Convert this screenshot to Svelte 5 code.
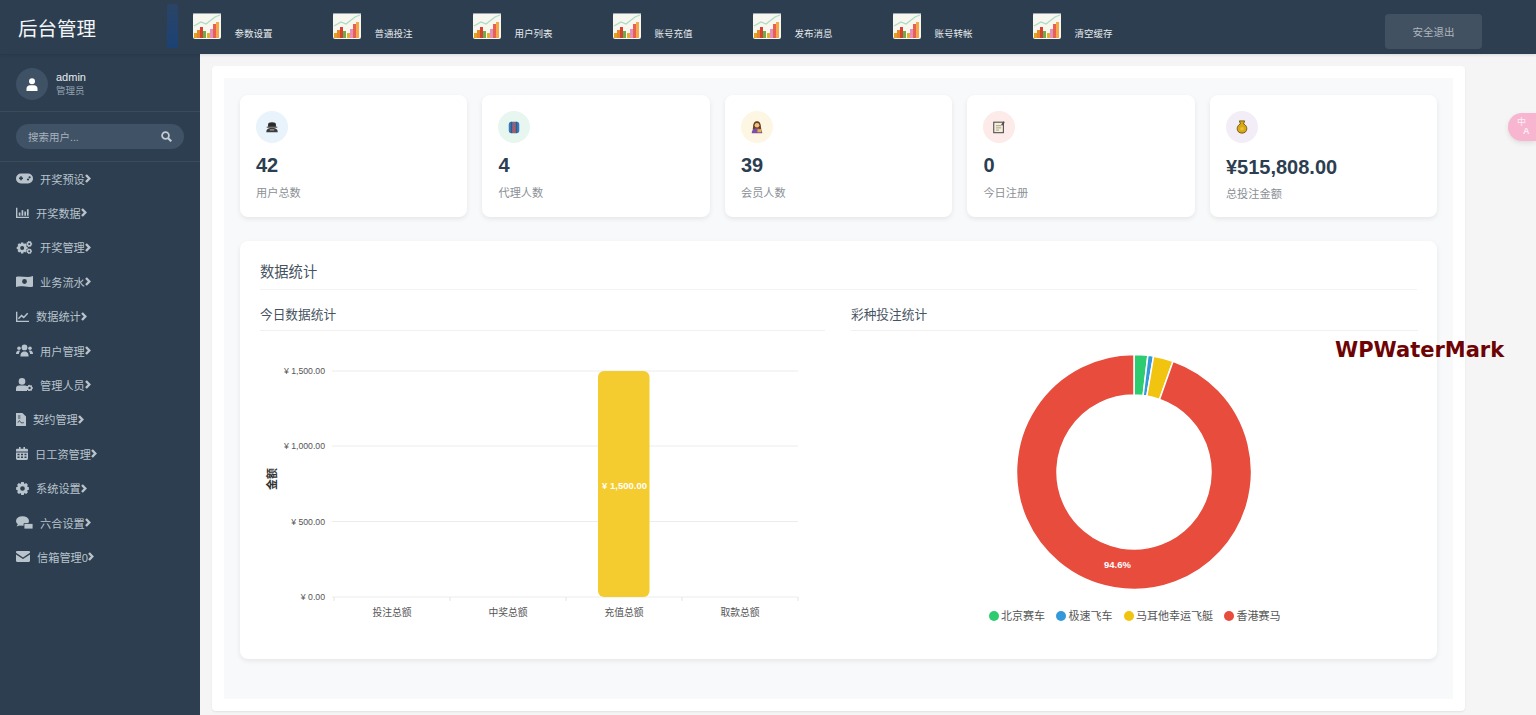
<script>
  function gear(cx, cy, r, teeth = 8) {
    const inner = r * 0.76;
    const step = (Math.PI * 2) / teeth;
    let d = '';
    for (let i = 0; i < teeth; i++) {
      const a = i * step;
      const pts = [
        [inner, a - step * 0.5],
        [r, a - step * 0.24],
        [r, a + step * 0.24]
      ];
      for (const [rad, ang] of pts) {
        d += `${d ? 'L' : 'M'}${(cx + rad * Math.cos(ang)).toFixed(2)} ${(cy + rad * Math.sin(ang)).toFixed(2)}`;
      }
    }
    const h = r * 0.36;
    d += `ZM${cx - h} ${cy}a${h} ${h} 0 1 0 ${h * 2} 0a${h} ${h} 0 1 0 ${-h * 2} 0Z`;
    return `<path fill-rule="evenodd" d="${d}"/>`;
  }

  const navItems = ['参数设置', '普通投注', '用户列表', '账号充值', '发布消息', '账号转帐', '清空缓存'];

  const menu = [
    { label: '开奖预设', w: 17, box: '0 0 17 12', icon: '<rect x="0" y="1" width="17" height="10" rx="5"/><rect x="3" y="5" width="4" height="1.6" fill="#2c3e50"/><rect x="4.2" y="3.8" width="1.6" height="4" fill="#2c3e50"/><circle cx="12" cy="7" r="1.1" fill="#2c3e50"/><circle cx="13.6" cy="4.8" r="1.1" fill="#2c3e50"/>' },
    { label: '开奖数据', w: 13, box: '0 0 14 12', icon: '<path d="M0 1h1.5v9.5H14V12H0z"/><rect x="3" y="6" width="1.8" height="3.5"/><rect x="6" y="3.5" width="1.8" height="6"/><rect x="9" y="5" width="1.8" height="4.5"/><rect x="11.8" y="2.5" width="1.8" height="7"/>' },
    { label: '开奖管理', w: 17, box: '0 0 17 14', icon: gear(6, 7.5, 6, 8) + gear(13.6, 3.2, 3.2, 7) + gear(13.6, 11, 3, 7) },
    { label: '业务流水', w: 17, box: '0 0 17 12', icon: '<path d="M0 1.4C5 -.2 11 3 17 .6V11C12 12.6 6 9.6 0 11.4z"/><circle cx="8.5" cy="6" r="2.4" fill="#2c3e50"/>' },
    { label: '数据统计', w: 13, box: '0 0 14 12', icon: '<path d="M0 1h1.5v9.5H14V12H0z"/><path d="M2.6 8.4 6 5l2.3 2L12.6 2.6" fill="none" stroke="currentColor" stroke-width="1.6"/>' },
    { label: '用户管理', w: 17, box: '0 0 17 13', icon: '<circle cx="8.5" cy="3.4" r="2.9"/><circle cx="3" cy="4.3" r="1.8"/><circle cx="14" cy="4.3" r="1.8"/><path d="M4.4 12.6c0-3.6 1.6-5 4.1-5s4.1 1.4 4.1 5z"/><path d="M0 10c0-2.4 1-3.6 3-3.6l1.2.4C3.4 7.7 3 8.6 2.9 10zM17 10c0-2.4-1-3.6-3-3.6l-1.2.4c.8.9 1.2 1.8 1.3 3.2z"/>' },
    { label: '管理人员', w: 17, box: '0 0 17 13', icon: '<circle cx="6" cy="3.4" r="3.3"/><path d="M0 13V10.2C0 8.4 1.4 7.4 3 7.4h6c1 0 1.6.3 2 .8V13z"/>' + gear(13.6, 10, 3.3, 7) },
    { label: '契约管理', w: 10, box: '0 0 10 13', icon: '<path d="M0 0h6.4L10 3.6V13H0z"/><path d="M2 3h2.4M2 5h2.4M2 9.6c1-2.6 1.8-2.2 2.4-.6.5 1 1.6 1 3.4.6" fill="none" stroke="#2c3e50" stroke-width=".9"/>' },
    { label: '日工资管理', w: 12, box: '0 0 12 13', icon: '<path fill-rule="evenodd" d="M0 3.2C0 2.3.6 1.8 1.4 1.8H3V0h1.6v1.8h2.8V0H9v1.8h1.6c.8 0 1.4.5 1.4 1.4v1.3H0zM0 5.4h12v6.2c0 .9-.6 1.4-1.4 1.4H1.4C.6 13 0 12.5 0 11.6zM1.5 6.8v1.4h2V6.8zm3.5 0v1.4h2V6.8zm3.5 0v1.4h2V6.8zM1.5 9.6V11h2V9.6zm3.5 0V11h2V9.6zm3.5 0V11h2V9.6z"/>' },
    { label: '系统设置', w: 13, box: '0 0 13 13', icon: gear(6.5, 6.5, 6.5, 8) },
    { label: '六合设置', w: 17, box: '0 0 17 13', icon: '<ellipse cx="6.5" cy="5" rx="6.5" ry="4.8"/><path d="M2 8l-1.5 2.5L5 9z"/><path d="M8 7.5h9V13H8z" stroke="#2c3e50" stroke-width=".8"/>' },
    { label: '信箱管理0', w: 14, box: '0 0 14 11', icon: '<path d="M0 1.2C0 .5.5 0 1.2 0h11.6C13.5 0 14 .5 14 1.2v.5L7 6.4 0 1.7z"/><path d="M0 3.4 7 8l7-4.6v6.4c0 .7-.5 1.2-1.2 1.2H1.2C.5 11 0 10.5 0 9.8z"/>' }
  ];

  const stats = [
    { value: '42', label: '用户总数', bg: '#e8f3fb', kind: 'hat' },
    { value: '4', label: '代理人数', bg: '#e8f6f0', kind: 'vest' },
    { value: '39', label: '会员人数', bg: '#fdf6e3', kind: 'woman' },
    { value: '0', label: '今日注册', bg: '#fcebe9', kind: 'note' },
    { value: '¥515,808.00', label: '总投注金额', bg: '#f3edf7', kind: 'bag', money: true }
  ];

  const yTicks = [
    { label: '¥ 1,500.00', y: 371 },
    { label: '¥ 1,000.00', y: 446 },
    { label: '¥ 500.00', y: 521.5 },
    { label: '¥ 0.00', y: 597 }
  ];
  const categories = ['投注总额', '中奖总额', '充值总额', '取款总额'];

  function arc(a0, a1) {
    const cx = 1134, cy = 472, R = 117.5, r = 77;
    const p = (rad, deg) => {
      const t = ((deg - 90) * Math.PI) / 180;
      return `${(cx + rad * Math.cos(t)).toFixed(2)} ${(cy + rad * Math.sin(t)).toFixed(2)}`;
    };
    const large = a1 - a0 > 180 ? 1 : 0;
    return `M${p(R, a0)}A${R} ${R} 0 ${large} 1 ${p(R, a1)}L${p(r, a1)}A${r} ${r} 0 ${large} 0 ${p(r, a0)}Z`;
  }

  const slices = [
    { name: '北京赛车', color: '#2ecc71', from: 0, to: 6.8 },
    { name: '极速飞车', color: '#3498db', from: 6.8, to: 9.6 },
    { name: '马耳他幸运飞艇', color: '#f1c40f', from: 9.6, to: 19.4 },
    { name: '香港赛马', color: '#e74c3c', from: 19.4, to: 360 }
  ];
</script>

{#snippet thumb()}
  <svg class="thumb" width="28" height="26" viewBox="0 0 28 26">
    <rect width="28" height="26" rx="2" fill="#f7f6ef" />
    <path d="M0 .5h28" stroke="#9aa5ab" />
    <path d="M1 13 8 9l5 2 9-7 5-2" fill="none" stroke="#a9dcc4" stroke-width="1.2" />
    <rect x="1" y="20" width="3" height="5" fill="#e0a21f" />
    <rect x="4" y="17" width="3" height="8" fill="#e8862c" />
    <rect x="7" y="14" width="3" height="11" fill="#d8402f" />
    <rect x="10" y="18" width="3" height="7" fill="#6cab4e" />
    <rect x="14" y="20" width="3" height="5" fill="#e6b12f" />
    <rect x="17" y="16" width="3" height="9" fill="#e28fc0" />
    <rect x="20" y="11" width="3" height="14" fill="#e8604f" />
    <rect x="23" y="9" width="3" height="16" fill="#f4a84a" />
  </svg>
{/snippet}

{#snippet statIcon(kind)}
  <svg width="14" height="14" viewBox="0 0 16 16">
    {#if kind === 'hat'}
      <path d="M3.5 8V5C3.5 3.5 5 2.5 8 2.5s4.5 1 4.5 2.5V8z" fill="#2b2b2b" />
      <rect x="2" y="7.5" width="12" height="1.5" fill="#666" />
      <path d="M1.5 14c0-3 1-5 6.5-5s6.5 2 6.5 5z" fill="#3c3c3c" />
      <rect x="5.5" y="10.5" width="5" height="1.5" fill="#999" />
    {:else if kind === 'vest'}
      <rect x="2" y="2" width="12" height="13" rx="3" fill="#3b78b5" />
      <path d="M7 2.5h2l.8 12H6.200z" fill="#c9504f" />
      <path d="M5 2v13M11 2v13" stroke="#1e4f80" stroke-width=".8" />
    {:else if kind === 'woman'}
      <path d="M3.5 8c0-4.5 2-6.500 4.500-6.500S12.500 3.500 12.500 8l.5 3H3z" fill="#6d3f20" />
      <circle cx="8" cy="6" r="2.7" fill="#f1c27d" />
      <path d="M2 15c0-3.500 2.500-5.500 6-5.500s6 2 6 5.500z" fill="#7b4fa8" />
      <rect x="8.5" y="10.5" width="4.5" height="3.5" fill="#e3b23c" />
    {:else if kind === 'note'}
      <rect x="2" y="2.5" width="11" height="12" fill="#f7efdc" stroke="#4a4a4a" stroke-width="1.2" />
      <path d="M4.5 6.5h6M4.5 9h6M4.5 11.5h3.5" stroke="#8a7a5f" stroke-width=".8" />
      <path d="m11 6 3-4" stroke="#4a4a4a" stroke-width="1.5" />
    {:else}
      <path d="M5 1h6L9.800 4.500c2.400 1 3.700 3.200 3.700 5.500 0 3-2.200 5-5.500 5s-5.500-2-5.500-5c0-2.300 1.300-4.500 3.700-5.500z" fill="#d8a914" stroke="#6d5208" stroke-width="1" />
      <circle cx="8" cy="10" r="2" fill="#e8c23e" />
    {/if}
  </svg>
{/snippet}

<div class="page">
  <header class="topbar">
    <div class="brand">后台管理</div>
    <div class="strip"></div>
    <nav class="topnav">
      {#each navItems as item}
        <a class="nav-item" href="#top">
          {@render thumb()}
          <span>{item}</span>
        </a>
      {/each}
    </nav>
    <button class="logout">安全退出</button>
  </header>

  <div class="body">
    <aside class="sidebar">
      <div class="user">
        <div class="avatar">
          <svg width="12" height="13" viewBox="0 0 12 13" fill="#fff">
            <circle cx="6" cy="3.3" r="3" />
            <path d="M.5 13v-2.2C.5 8.5 2 7.3 4 7.3h4c2 0 3.5 1.2 3.5 3.5V13z" />
          </svg>
        </div>
        <div class="user-text">
          <div class="user-name">admin</div>
          <div class="user-role">管理员</div>
        </div>
      </div>
      <div class="search-wrap">
        <div class="search">
          <input type="text" placeholder="搜索用户..." />
          <svg width="11" height="11" viewBox="0 0 11 11" fill="none" stroke="#c3cbd3" stroke-width="1.8">
            <circle cx="4.5" cy="4.5" r="3.4" />
            <path d="m7 7 3.3 3.3" stroke-width="2.2" />
          </svg>
        </div>
      </div>
      <ul class="menu">
        {#each menu as m}
          <li>
            <svg class="menu-icon" width={m.w} height="13" viewBox={m.box}>{@html m.icon}</svg>
            <span>{m.label}</span>
            <svg class="chev" width="6" height="9" viewBox="0 0 6 9" fill="none" stroke="currentColor" stroke-width="2.4">
              <path d="m1 1 3.3 3.5L1 8" />
            </svg>
          </li>
        {/each}
      </ul>
    </aside>

    <main class="main">
      <div class="panel">
        <div class="inner">
          <section class="cards">
            {#each stats as s}
              <div class="card" class:money={s.money}>
                <div class="card-icon" style="background: {s.bg}">
                  {@render statIcon(s.kind)}
                </div>
                <div class="card-value">{s.value}</div>
                <div class="card-label">{s.label}</div>
              </div>
            {/each}
          </section>

          <section class="stats">
            <h2>数据统计</h2>
            <div class="columns">
              <div class="col">
                <h3>今日数据统计</h3>
                <svg class="bar-chart" viewBox="260 331 565 308" width="565" height="308">
                  {#each yTicks as t}
                    <line x1="332" x2="798" y1={t.y} y2={t.y} stroke="#ececec" />
                    <text x="325" y={t.y + 3} text-anchor="end" class="tick">{t.label}</text>
                  {/each}
                  {#each [334, 450, 566, 682, 798] as x}
                    <line x1={x} x2={x} y1="597" y2="601" stroke="#e4e4e4" />
                  {/each}
                  <rect x="598" y="371" width="51.5" height="226" rx="6" fill="#f4cc30" />
                  <text x="624.5" y="489" text-anchor="middle" class="bar-label">¥ 1,500.00</text>
                  {#each categories as c, i}
                    <text x={392 + i * 116} y="615.5" text-anchor="middle" class="cat">{c}</text>
                  {/each}
                  <text transform="translate(276 479) rotate(-90)" text-anchor="middle" class="axis">金额</text>
                </svg>
              </div>
              <div class="col">
                <h3>彩种投注统计</h3>
                <svg class="donut" viewBox="851 331 567 276" width="567" height="276">
                  {#each slices as s}
                    <path d={arc(s.from, s.to)} fill={s.color} stroke="#fff" stroke-width="1.5" />
                  {/each}
                  <text x="1117.5" y="568" text-anchor="middle" class="pct">94.6%</text>
                </svg>
                <div class="legend">
                  {#each slices as s}
                    <span class="legend-item"><i style="background: {s.color}"></i>{s.name}</span>
                  {/each}
                </div>
              </div>
            </div>
          </section>
        </div>
      </div>
    </main>
  </div>

  <div class="translate"><span>中</span><span class="a">A</span></div>
  <div class="watermark">WPWaterMark</div>
</div>

<style>
  :global(body) {
    margin: 0;
    overflow: hidden;
    background: #f5f5f5;
  }

  .page {
    position: relative;
    height: 715px;
    overflow: hidden;
    font-family: "Liberation Sans", "Noto Sans CJK SC", sans-serif;
  }

  .topbar {
    position: relative;
    z-index: 2;
    height: 54px;
    display: flex;
    align-items: center;
    background: #2c3e50;
    color: #fff;
    box-shadow: 0 1px 3px rgba(0, 0, 0, 0.12);
  }

  .brand {
    width: 149px;
    padding-left: 18px;
    font-size: 19.5px;
    color: #f4f6f7;
  }

  .strip {
    width: 11px;
    height: 44px;
    margin-top: -2px;
    border-radius: 2px;
    background: linear-gradient(#2a4466, #1b4275);
  }

  .topnav {
    display: flex;
    margin-left: 15px;
  }

  .nav-item {
    width: 140px;
    display: flex;
    gap: 13.5px;
    color: #e6e9ec;
    font-size: 9.5px;
    text-decoration: none;
  }

  .thumb {
    margin-top: -1px;
    flex: none;
  }

  .nav-item span {
    margin-top: 12px;
  }

  .logout {
    margin-left: auto;
    margin-right: 54px;
    margin-top: 8px;
    width: 97px;
    height: 35px;
    border: none;
    border-radius: 4px;
    background: rgba(255, 255, 255, 0.1);
    color: #aeb6be;
    font-family: inherit;
    font-size: 10.5px;
  }

  .body {
    display: flex;
    height: 661px;
  }

  .sidebar {
    width: 200px;
    flex: none;
    background: #2c3e50;
    color: #b9c3cc;
  }

  .user {
    height: 58px;
    box-sizing: border-box;
    padding: 14px 16px 0;
    display: flex;
    gap: 8px;
    border-bottom: 1px solid rgba(255, 255, 255, 0.07);
  }

  .avatar {
    width: 32px;
    height: 32px;
    border-radius: 50%;
    background: #3f5165;
    display: grid;
    place-items: center;
  }

  .user-text {
    padding-top: 2px;
  }

  .user-name {
    font-size: 11px;
    line-height: 14px;
    color: #e8ecef;
  }

  .user-role {
    font-size: 9.5px;
    line-height: 13px;
    color: #97a4b0;
  }

  .search-wrap {
    padding: 12px 16px;
    border-bottom: 1px solid rgba(255, 255, 255, 0.07);
  }

  .search {
    height: 25px;
    border-radius: 13px;
    background: #405266;
    display: flex;
    align-items: center;
    padding: 0 12px;
  }

  .search input {
    flex: 1;
    min-width: 0;
    border: none;
    outline: none;
    background: none;
    padding: 0;
    font-family: inherit;
    font-size: 10.5px;
    color: #c3cbd3;
  }

  .search input::placeholder {
    color: #a9b4be;
  }

  .menu {
    list-style: none;
    margin: -0.6px 0 0;
    padding: 0;
  }

  .menu li {
    height: 34.4px;
    padding-left: 16px;
    display: flex;
    align-items: center;
    gap: 7px;
    font-size: 11.2px;
  }

  .menu-icon {
    flex: none;
    fill: currentColor;
  }

  .chev {
    margin-left: -7px;
  }

  .main {
    flex: 1;
    padding: 12px 71px 4px 12px;
    min-width: 0;
  }

  .panel {
    height: 100%;
    box-sizing: border-box;
    padding: 12px;
    background: #fff;
    border-radius: 4px;
    box-shadow: 0 1px 2px rgba(0, 0, 0, 0.08);
  }

  .inner {
    height: 100%;
    box-sizing: border-box;
    padding: 17px 16px;
    background: #f7f9fa;
  }

  .cards {
    display: grid;
    grid-template-columns: repeat(5, 1fr);
    gap: 15.4px;
  }

  .card {
    height: 122px;
    box-sizing: border-box;
    padding: 16px;
    background: #fff;
    border-radius: 8px;
    box-shadow: 0 2px 5px rgba(0, 0, 0, 0.08);
  }

  .card-icon {
    width: 32px;
    height: 32px;
    border-radius: 50%;
    display: grid;
    place-items: center;
  }

  .card-value {
    margin-top: 10px;
    font-size: 20px;
    font-weight: 700;
    line-height: 24px;
    color: #2c3e50;
  }

  .card.money .card-value {
    margin-top: 12px;
  }

  .card-label {
    margin-top: 8px;
    font-size: 11.2px;
    line-height: 16px;
    color: #8b9095;
  }

  .card.money .card-label {
    margin-top: 7px;
  }

  .stats {
    margin-top: 24px;
    height: 418px;
    box-sizing: border-box;
    padding: 20px;
    background: #fff;
    border-radius: 8px;
    box-shadow: 0 2px 5px rgba(0, 0, 0, 0.08);
  }

  h2 {
    margin: 0 0 16px;
    padding: 1px 0 7px;
    border-bottom: 1px solid #f3f3f3;
    font-size: 14.3px;
    font-weight: 400;
    line-height: 20px;
    color: #46535f;
  }

  .columns {
    display: grid;
    grid-template-columns: 1fr 1fr;
    gap: 26px;
  }

  h3 {
    margin: 0;
    padding-bottom: 6px;
    border-bottom: 1px solid #f0f0f0;
    font-size: 12.7px;
    font-weight: 400;
    line-height: 18px;
    color: #46535f;
  }

  .bar-chart,
  .donut {
    display: block;
  }

  .tick {
    font-size: 8.7px;
    fill: #555;
  }

  .bar-label {
    font-size: 9.5px;
    font-weight: 700;
    fill: #fff;
  }

  .cat {
    font-size: 9.8px;
    fill: #555;
  }

  .axis {
    font-size: 11px;
    font-weight: 700;
    fill: #333;
  }

  .pct {
    font-size: 9.5px;
    font-weight: 700;
    fill: #fff;
  }

  .legend {
    display: flex;
    justify-content: center;
    gap: 11px;
    margin-top: 1px;
    font-size: 11px;
    line-height: 16px;
    color: #555;
  }

  .legend-item {
    display: flex;
    align-items: center;
    gap: 2.5px;
  }

  .legend-item i {
    width: 10px;
    height: 10px;
    border-radius: 50%;
  }

  .translate {
    position: absolute;
    right: 0;
    top: 113px;
    width: 28px;
    height: 28px;
    box-sizing: border-box;
    padding: 5px 0 0 9px;
    border-radius: 14px 0 0 14px;
    background: #f8b5d0;
    box-shadow: 0 2px 5px rgba(0, 0, 0, 0.1);
    color: #fdeef4;
    font-size: 9px;
    line-height: 9px;
  }

  .translate span {
    display: block;
  }

  .translate .a {
    margin-left: 6px;
    font-weight: 700;
  }

  .watermark {
    position: absolute;
    left: 1335px;
    top: 337px;
    font-family: "DejaVu Sans", sans-serif;
    font-size: 21px;
    font-weight: 700;
    line-height: 26px;
    color: #6e0303;
  }
</style>
